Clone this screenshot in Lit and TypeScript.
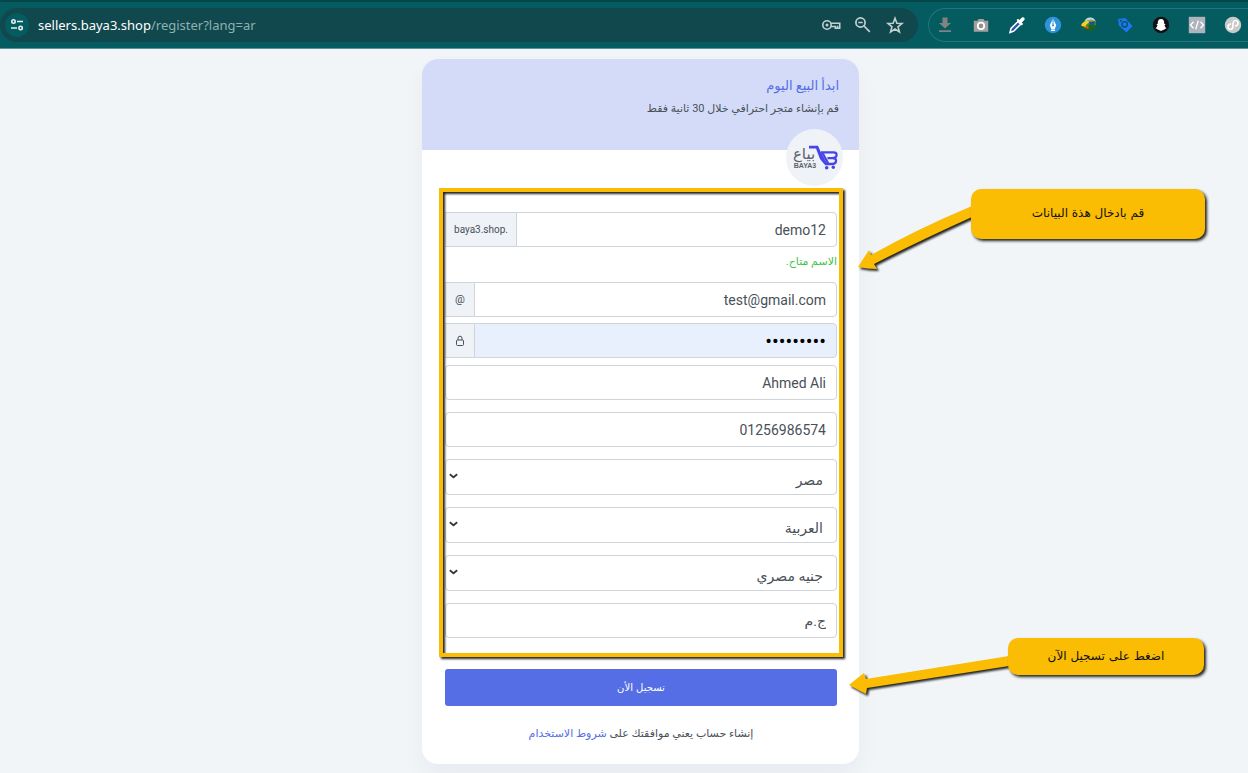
import { LitElement, html, css, svg } from "lit";
import { customElement, property } from "lit/decorators.js";

const key = svg`<g fill="none" stroke="#c3d0d1" stroke-width="1.600"><circle cx="5" cy="9" r="4.200"/><path d="M8.800 7.200H17.700V12.300H13.300V10.500H8.800M15.500 12V9.800"/></g><circle cx="5" cy="9" r="1.500" fill="#c3d0d1"/>`;
const magnifier = svg`<g fill="none" stroke="#c3d0d1" stroke-width="1.700"><circle cx="6.500" cy="6.500" r="4.600"/><path d="M10 10L15.800 15.800M4.300 6.500H8.700"/></g>`;
const star = svg`<path d="M9 2.300L10.900 7.200L16 7.500L12 10.800L13.400 15.900L9 13L4.600 15.900L6 10.800L2 7.500L7.100 7.200Z" fill="none" stroke="#c3d0d1" stroke-width="1.600"/>`;

const extensions = [
  { name: "Download", art: svg`<path d="M6.500 1.500h5V7H15L9 12.400L3 7h3.500zM3 14.300h12v1.700H3z" fill="#7f8382"/>` },
  { name: "Screenshot", art: svg`<path d="M2 4.800h3.500L6.500 3h5l1 1.800H16.200V15.700H1.800V4.800z" fill="#a3a09f"/><circle cx="9" cy="9.900" r="3.200" fill="#8f8f8f" stroke="#fff" stroke-width="1.800"/>` },
  { name: "Colour picker", art: svg`<path d="M2 16.500L3 12.500L10 5.500L12.700 8.200L5.700 15.200z" fill="#2f55b8" stroke="#fff" stroke-width="1.500"/><path d="M8.500 4L10 2.700L11.300 4L14 1.500C16 0.500 17.500 2.500 16.300 4L13.800 6.600L15.100 8L13.800 9.400z" fill="#fff"/>` },
  { name: "Pen tool", art: svg`<circle cx="9" cy="9" r="8.200" fill="#2f93dc"/><path d="M9 2.500L12.200 9.300L10.800 13H7.200L5.800 9.300zM7 13.600h4v1.400H7z" fill="#fff"/><path d="M9 3v6.500" stroke="#2f93dc"/><circle cx="9" cy="9.500" r="1" fill="#2f93dc"/>` },
  { name: "Download manager", art: svg`<circle cx="9.800" cy="7.500" r="6.200" fill="#3c8f2c"/><path d="M4.500 6C6 0.500 14 0 15.700 5.500C12 2.500 8 3.500 4.500 6" fill="#b9d7ee"/><path d="M1.500 10C0 5 12 3 16.500 5.500C9 5.500 5 8 6 11z" fill="#f3cf27"/><path d="M8.500 5.500L15.500 5.300L14 9L10 9z" fill="#244e9b"/><path d="M1 10.500L8.500 12V8.800L17 9.500L10 16.500V14C6 14.500 2 14 1 10.500" fill="#1d6318"/><path d="M2 10.500L8 13L8.800 11" fill="#e54d23"/>` },
  { name: "Price tag", art: svg`<path d="M2 3L9 2L16.500 10L10.500 16.500L3 9.500z" fill="#1a78f2"/><circle cx="8.700" cy="8.300" r="2.700" fill="none" stroke="#0a5062" stroke-width="1.300"/><circle cx="4.800" cy="4.800" r="1" fill="#0a5062"/>` },
  { name: "Snap pixel", art: svg`<circle cx="9" cy="9" r="8.200" fill="#111"/><path d="M9 3C6.500 3 5.600 4.800 5.800 7.800L4.400 8.200L5.500 9.400C5 11 4.200 11.700 3.300 12.200L5.300 12.900L5.700 13.700C7 13.300 7.800 14.700 9 14.700S11 13.300 12.300 13.700L12.700 12.900L14.700 12.200C13.800 11.700 13 11 12.500 9.400L13.600 8.200L12.200 7.800C12.400 4.800 11.500 3 9 3" fill="#fff"/>` },
  { name: "Source viewer", art: svg`<path d="M.8.800h16.400v16.400H.800z" fill="#aeb3bd"/><path d="M5.500 5.800L2.500 9L5.500 12.200M12.500 5.800L15.500 9L12.500 12.200M10.300 4.800L7.700 13.200" fill="none" stroke="#fff" stroke-width="1.300"/>` },
  { name: "Link helper", art: svg`<circle cx="9" cy="9" r="8.200" fill="#c9c9c9"/><path d="M7 8.200C3 8 3 13.500 6.500 13.500C9 13.500 9 11.500 9 9S9 4.500 11.500 4.500C15 4.500 15 10 11 9.800" fill="none" stroke="#fff" stroke-width="1.700"/>` },
];

@customElement("browser-bar")
export class BrowserBar extends LitElement {
  static styles = css`
    :host { display: block; font-family: "Noto Sans", "Open Sans", sans-serif; }
    .bar {
      display: flex; align-items: center; gap: 10px; height: 49px; box-sizing: border-box;
      background: #045c60; border-bottom: 1px solid #5b9194; border-top: 2px solid #04454a;
      overflow: hidden;
    }
    .address {
      display: flex; align-items: center; flex: 1; min-width: 0; height: 34px; box-sizing: border-box;
      padding: 0 14px 0 5px; background: #11484d; border-radius: 17px;
    }
    .url { flex: 1; font-size: 13px; line-height: 20px; color: #8fb0b2; margin-left: 9px; white-space: nowrap; overflow: hidden; }
    .host { color: #fff; }
    .tools { display: flex; gap: 14px; }
    .icon { display: block; width: 18px; height: 18px; padding: 0; border: 0; background: none; flex: none; }
    .site { width: 24px; height: 24px; border-radius: 12px; background: #045c60; padding: 4px; box-sizing: border-box; border: 0; flex: none; }
    .extensions {
      display: flex; align-items: center; gap: 18px; height: 34px; box-sizing: border-box;
      padding: 0 6px 0 7px; border: 1px solid #22747a; border-right: 0; border-radius: 17px 0 0 17px;
    }
    svg { display: block; overflow: visible; }
  `;

  render() {
    return html`
      <header class="bar">
        <div class="address">
          <button class="site" aria-label="Site information">
            <svg width="16" height="16" viewBox="0 0 16 16" fill="none" stroke="#e8f0f0" stroke-width="1.600">
              <circle cx="4.500" cy="4.500" r="1.700"/><path d="M8 4.500h6M2 11h6"/><circle cx="11.600" cy="11" r="1.700"/>
            </svg>
          </button>
          <div class="url" dir="ltr"><span class="host">sellers.baya3.shop</span>/register?lang=ar</div>
          <div class="tools">
            ${[["Passwords", key], ["Zoom", magnifier], ["Bookmark", star]].map(([name, art]) => html`
              <button class="icon" aria-label=${name as string}><svg width="18" height="18" viewBox="0 0 18 18">${art}</svg></button>`)}
          </div>
        </div>
        <nav class="extensions">
          ${extensions.map(e => html`<button class="icon" aria-label=${e.name}><svg width="18" height="18" viewBox="0 0 18 18">${e.art}</svg></button>`)}
        </nav>
      </header>`;
  }
}

@customElement("brand-badge")
export class BrandBadge extends LitElement {
  static styles = css`
    :host { display: block; width: 57px; height: 57px; border-radius: 50%; background: #eff2f7; }
    .logo { display: block; }
    .arabic { font: 15px "DejaVu Sans", sans-serif; fill: #606268; }
    .latin { font: bold 7px "Liberation Sans", sans-serif; fill: #606268; }
  `;
  render() {
    return html`
      <svg class="logo" width="57" height="57" viewBox="0 0 57 57">
        <text class="arabic" x="18" y="30" text-anchor="middle" direction="rtl">بياع</text>
        <text class="latin" x="19" y="39" text-anchor="middle">BAYA3</text>
        <path d="M23 16.800H32L34.500 22.500L41.500 35.500H38.500L34 30L30 19.500H23Z" fill="#4745e5"/>
        <path d="M35 23.300H47.500Q51 23.300 50.500 26.500Q50 29.200 46.500 29.200H41.500M46.500 29.200Q50.500 29.200 50 32.200Q49.500 35 46 35H39M36.500 24L42 34" fill="none" stroke="#4745e5" stroke-width="2.300"/>
        <circle cx="40.700" cy="38.700" r="1.800" fill="#4745e5"/><circle cx="47.300" cy="38.200" r="1.700" fill="#4745e5"/>
      </svg>`;
  }
}

@customElement("call-out")
export class CallOut extends LitElement {
  @property() text = "";
  static styles = css`
    :host {
      display: flex; justify-content: center; box-sizing: border-box; border-radius: 10px;
      background: #fbbc04; box-shadow: 2px 2px 3px #222; color: #111;
      font: 12px/20px "DejaVu Sans", sans-serif;
    }
  `;
  render() { return html`<span dir="rtl">${this.text}</span>`; }
}

@customElement("app-root")
export class AppRoot extends LitElement {
  static styles = css`
    :host {
      display: flex; flex-direction: column; min-height: 100vh; background: #f1f5f8;
      font-family: Roboto, "DejaVu Sans", sans-serif; color: #495057;
    }
    .page { display: flex; justify-content: center; padding: 10px 0 8px 33px; overflow: hidden; flex: 1; align-items: flex-start; }
    .card {
      position: relative; width: 100%; max-width: 437px; background: #fff; border-radius: 16px;
      box-shadow: 0 12px 24px rgba(18, 38, 63, 0.04);
    }
    .intro { background: #d4dbf9; border-radius: 16px 16px 0 0; padding: 16px 20px 29px; }
    .title { margin: 0; font-size: 13px; line-height: 22px; font-weight: 400; color: #556ee6; }
    .lead { margin: 0; font-size: 11px; line-height: 24px; }
    .badge { display: block; margin: -21px 16px 0; }
    .form { padding: 26px 22px 20px 23px; }
    .fields { position: relative; display: flex; flex-direction: column; }
    .frame {
      position: absolute; inset: -24px -6px -19px -6px; border: 4px solid #fbbc04;
      filter: drop-shadow(2px 2px 1px #222); pointer-events: none;
    }
    .group { display: flex; height: 35px; }
    .control {
      min-width: 0; width: 100%; height: 35px; box-sizing: border-box; padding: 0 10px; margin: 0;
      border: 1px solid #ced4da; border-radius: 4px; background: #fff; color: #495057;
      font: 14px/20px Roboto, "DejaVu Sans", sans-serif; text-align: right; outline: 0; appearance: none;
    }
    .group .control { flex: 1; border-radius: 0 4px 4px 0; }
    .group .filled { background: #e8f0fe; color: #000; font-size: 20px; }
    .addon {
      display: flex; align-items: center; justify-content: center; box-sizing: border-box; min-width: 29px; padding: 0 8px;
      border: 1px solid #ced4da; border-right: 0; border-left-color: #e2e5ea; background: #eff2f7;
      font-size: 11px; line-height: 16px;
    }
    .host-addon { min-width: 71px; font-size: 10px; }
    .hint { margin: 0; font-size: 11px; line-height: 16px; padding: 7px 0 12px; color: #3fc34a; }
    .tight { margin-top: 6px; }
    .near { margin-top: 7px; }
    .next { margin-top: 12px; }
    .picker { position: relative; display: flex; height: 36px; }
    .picker .control { height: 36px; padding: 6px 13px 0; }
    .chevron { position: absolute; left: 4px; top: 13px; pointer-events: none; }
    .submit {
      display: block; width: 100%; height: 37px; margin-top: 31px; padding: 0; border: 0; border-radius: 3px; background: #556ee6;
      color: #fff; font: 10px/16px "DejaVu Sans", sans-serif;
    }
    .terms { margin: 0; padding-top: 18px; font-size: 11px; line-height: 20px; text-align: center; }
    .terms a { color: #556ee6; text-decoration: none; }
    .arrows { position: absolute; left: 0; top: 0; overflow: visible; pointer-events: none; filter: drop-shadow(2px 2px 1px #222); }
    .first-note { position: absolute; left: 549px; top: 130px; width: 234px; height: 50px; padding-top: 14px; }
    .second-note { position: absolute; left: 586px; top: 579px; width: 196px; height: 37px; padding-top: 8px; }
  `;

  private picker(label: string, value: string) {
    return html`
      <div class="picker next">
        <select class="control" aria-label=${label}><option>${value}</option></select>
        <svg class="chevron" width="9" height="9" viewBox="0 0 9 9"><path d="M.800 2.300L4.500 5.300L8.200 2.300" fill="none" stroke="#343a40" stroke-width="1.800"/></svg>
      </div>`;
  }

  render() {
    return html`
      <browser-bar></browser-bar>
      <main class="page">
        <section class="card" dir="rtl" lang="ar">
          <div class="intro">
            <h1 class="title">ابدأ البيع اليوم</h1>
            <p class="lead">قم بإنشاء متجر احترافي خلال 30 ثانية فقط</p>
          </div>
          <brand-badge class="badge"></brand-badge>
          <form class="form">
            <div class="fields">
              <div class="group">
                <input class="control" aria-label="اسم المتجر" value="demo12">
                <span class="addon host-addon" dir="ltr">baya3.shop.</span>
              </div>
              <p class="hint">الاسم متاح.</p>
              <div class="group">
                <input class="control" type="email" aria-label="البريد الإلكتروني" value="test@gmail.com">
                <span class="addon">@</span>
              </div>
              <div class="group tight">
                <input class="control filled" type="password" aria-label="كلمة المرور" autocomplete="off" value="demo12345">
                <span class="addon">
                  <svg width="10" height="12" viewBox="0 0 10 12" fill="none" stroke="#495057"><rect x="1.500" y="5" width="7" height="5.500" rx="1"/><path d="M3 5V3.200a2 2 0 0 1 4 0V5"/></svg>
                </span>
              </div>
              <input class="control near" aria-label="الاسم" value="Ahmed Ali">
              <input class="control next" aria-label="الهاتف" value="01256986574">
              ${this.picker("الدولة", "مصر")}
              ${this.picker("اللغة", "العربية")}
              ${this.picker("العملة", "جنيه مصري")}
              <input class="control next" aria-label="رمز العملة" value="ج.م">
              <div class="frame"></div>
            </div>
            <button class="submit" type="button">تسجيل الأن</button>
            <p class="terms">إنشاء حساب يعني موافقتك على <a href="#terms">شروط الاستخدام</a></p>
          </form>
          <svg class="arrows" width="1" height="1" fill="#fbbc04">
            <path d="M550 147Q495 170 449 196L447 191Q441 200 436 208Q445 210 455 210L452 205Q497 182 550 158Z"/>
            <path d="M587 597L444 620L442 614Q434 620 427 626Q436 631 444 635L445 629L587 607Z"/>
          </svg>
          <call-out class="first-note" text="قم بادخال هذة البيانات"></call-out>
          <call-out class="second-note" text="اضغط على تسجيل الآن"></call-out>
        </section>
      </main>`;
  }
}
